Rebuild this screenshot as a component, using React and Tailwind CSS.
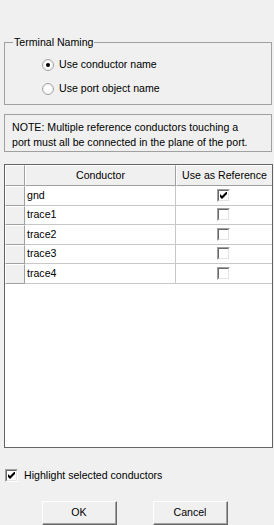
import React from "react";

function Radio({ checked }) {
  return (
    <svg width="12" height="12" viewBox="0 0 12 12" className="shrink-0">
      <circle cx="6" cy="6" r="5.5" fill="#ffffff" stroke="#a0a0a0" />
      <circle cx="6" cy="6" r="4.5" fill="#ffffff" stroke="#e3e3e3" />
      {checked && <circle cx="6" cy="6" r="2" fill="#000000" />}
    </svg>
  );
}

function Check({ checked }) {
  return (
    <div className="w-[13px] h-[13px] shrink-0 border-t border-l border-[#a0a0a0] border-r-white border-b-white border-r border-b bg-white flex">
      <div className="flex-1 border-t border-l border-[#696969] border-r border-b border-r-[#e3e3e3] border-b-[#e3e3e3] flex items-center justify-center">
        {checked && (
          <svg width="7" height="7" viewBox="0 0 7 7">
            <path d="M0 2 L2 4 L7 -1 L7 2 L2 7 L0 5 Z" fill="#000" />
          </svg>
        )}
      </div>
    </div>
  );
}

function Button({ children }) {
  return (
    <div className="w-[75px] h-[24px] border-t border-l border-white border-r border-b border-r-[#696969] border-b-[#696969] flex">
      <div className="flex-1 border-r border-b border-[#a0a0a0] bg-[#f0f0f0] flex items-center justify-center">
        {children}
      </div>
    </div>
  );
}

const rows = [
  { name: "gnd", ref: true },
  { name: "trace1", ref: false },
  { name: "trace2", ref: false },
  { name: "trace3", ref: false },
  { name: "trace4", ref: false },
];

export default function App() {
  return (
    <div
      className="w-[274px] h-[525px] bg-[#f0f0f0] text-black text-[10.6px] leading-[13px] flex flex-col pl-[4px] overflow-hidden"
      style={{ fontFamily: '"Liberation Sans", Arial, sans-serif' }}
    >
      {/* Terminal Naming group */}
      <div className="relative mt-[42px] w-[268px] h-[63px] border border-[#a0a0a0] flex flex-col pl-[37px] pt-[15px] gap-[11px]">
        <span className="absolute top-[-7px] left-[8px] px-[1px] bg-[#f0f0f0]">
          Terminal Naming
        </span>
        <label className="flex items-center gap-[5px] h-[13px]">
          <Radio checked />
          <span>Use conductor name</span>
        </label>
        <label className="flex items-center gap-[5px] h-[13px]">
          <Radio />
          <span>Use port object name</span>
        </label>
      </div>

      {/* Note */}
      <div className="mt-[9px] w-[268px] h-[38px] border border-[#a0a0a0] pl-[7px] pt-[5px] leading-[15px]">
        NOTE: Multiple reference conductors touching a
        <br />
        port must all be connected in the plane of the port.
      </div>

      {/* Grid */}
      <div className="mt-[12px] w-[269px] h-[284px] border border-[#646464] bg-white flex flex-col">
        <div className="flex h-[21px] shrink-0">
          <div className="w-[20px] border-r border-b border-[#a0a0a0] bg-[#f0f0f0] border-t border-l border-t-white border-l-white" />
          <div className="w-[151px] border-r border-b border-[#a0a0a0] bg-[#f0f0f0] border-t border-l border-t-white border-l-white flex items-center justify-center">
            Conductor
          </div>
          <div className="flex-1 border-b border-[#a0a0a0] bg-[#f0f0f0] border-t border-l border-t-white border-l-white flex items-center justify-center">
            Use as Reference
          </div>
        </div>
        {rows.map((r) => (
          <div key={r.name} className="flex h-[19.5px] shrink-0">
            <div className="w-[20px] border-r border-b border-[#a0a0a0] bg-[#f0f0f0] border-t border-l border-t-white border-l-white" />
            <div className="w-[151px] border-r border-b border-[#c8c8c8] flex items-center pl-[2px]">
              {r.name}
            </div>
            <div className="flex-1 border-b border-[#c8c8c8] flex items-center justify-center pr-[1px]">
              <Check checked={r.ref} />
            </div>
          </div>
        ))}
      </div>

      {/* Highlight */}
      <label className="mt-[21px] flex items-center gap-[6px] pl-[1px] h-[13px]">
        <Check checked />
        <span>Highlight selected conductors</span>
      </label>

      {/* Buttons */}
      <div className="mt-[19px] flex gap-[36px] pl-[38px]">
        <Button>OK</Button>
        <Button>Cancel</Button>
      </div>
    </div>
  );
}
